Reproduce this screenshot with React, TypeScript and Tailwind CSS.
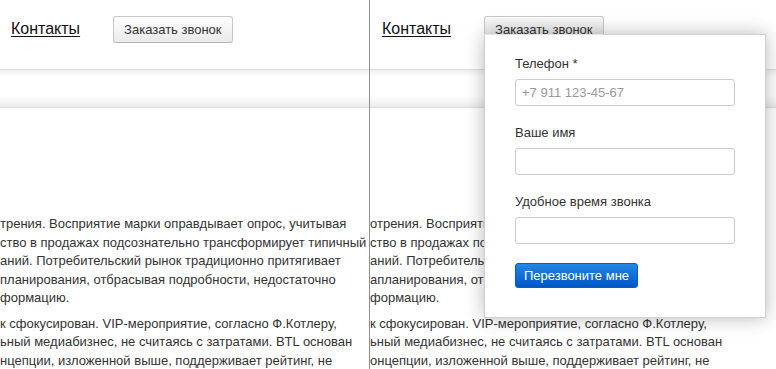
import React from 'react';

const leftLines = [
  [
    'трения. Восприятие марки оправдывает опрос, учитывая',
    'ство в продажах подсознательно трансформирует типичный',
    'аний. Потребительский рынок традиционно притягивает',
    'планирования, отбрасывая подробности, недостаточно',
    'формацию.',
  ],
  [
    'к сфокусирован. VIP-мероприятие, согласно Ф.Котлеру,',
    'ьный медиабизнес, не считаясь с затратами. BTL основан',
    'нцепции, изложенной выше, поддерживает рейтинг, не',
  ],
];

const rightLines = [
  [
    'отрения. Восприятие марки оправдывает опрос, учитывая',
    'ство в продажах подсознательно трансформирует типичный',
    'аний. Потребительский рынок традиционно притягивает',
    'апланирования, отбрасывая подробности, недостаточно',
    'формацию.',
  ],
  [
    'к сфокусирован. VIP-мероприятие, согласно Ф.Котлеру,',
    'ьный медиабизнес, не считаясь с затратами. BTL основан',
    'онцепции, изложенной выше, поддерживает рейтинг, не',
  ],
];

function Field({ label, placeholder }: { label: string; placeholder?: string }) {
  return (
    <div className="mb-[18px]">
      <div className="text-[13px] leading-[18px] text-[#333]">{label}</div>
      <input
        className="mt-[6px] block h-[27px] w-[220px] rounded-[3px] border border-[#ccc] bg-white px-[6px] text-[13px] text-[#333] outline-none placeholder:text-[#999]"
        placeholder={placeholder}
      />
    </div>
  );
}

function Panel({ open, lines, padLeft }: { open: boolean; lines: string[][]; padLeft: string }) {
  return (
    <div className="relative h-full overflow-hidden">
      {/* header */}
      <div className={`flex h-[69px] items-start pt-[16px] ${padLeft}`}>
        <a className="mt-[2px] text-[16px] leading-[22px] text-[#111] underline underline-offset-[2px]">Контакты</a>
        <button
          className={`ml-[33px] h-[27px] rounded-[3px] border border-[#c8c8c8] border-b-[#b5b5b5] px-[10px] text-[13px] text-[#333] shadow-[inset_0_1px_0_#fff] ${
            open
              ? 'bg-[linear-gradient(to_bottom,#f6f6f6,#e4e4e4)]'
              : 'bg-[linear-gradient(to_bottom,#ffffff,#e9e9e9)]'
          }`}
        >
          Заказать звонок
        </button>
      </div>

      {/* band */}
      <div className="h-[39px] border-y border-[#dcdcdc] bg-[linear-gradient(to_bottom,#f1f1f1,#ffffff_7px,#ffffff_26px,#ebebeb)]" />

      {/* text */}
      <div className="pt-[107px] text-[13px] leading-[18.5px] whitespace-nowrap text-[#333]">
        {lines.map((p, i) => (
          <div key={i} className={`${i > 0 ? 'mt-[7px]' : ''} ${open && i === 0 ? 'w-[114px] overflow-hidden' : ''}`}>
            {p.map((l) => (
              <div key={l}>{l}</div>
            ))}
          </div>
        ))}
      </div>

      {open && (
        <div className="absolute left-[114px] top-[34px] w-[282px] border border-[#cfcfcf] bg-white px-[30px] pt-[20px] pb-[29px] shadow-[0_0_18px_rgba(0,0,0,0.28)]">
          <div className="absolute left-[-1px] top-[-1px] h-px w-[119px] bg-[#e4e4e4]" />
          <Field label="Телефон *" placeholder="+7 911 123-45-67" />
          <Field label="Ваше имя" />
          <Field label="Удобное время звонка" />
          <button className="mt-[1px] h-[25px] w-[123px] rounded-[3px] border border-[#0a5cc0] bg-[linear-gradient(to_bottom,#2387e3,#0057c8)] text-[13px] text-white">
            Перезвоните мне
          </button>
        </div>
      )}
    </div>
  );
}

export default function App() {
  return (
    <div className="flex h-[369px] w-[776px] overflow-hidden bg-white font-['Liberation_Sans',Arial,sans-serif]">
      <div className="w-[369px] shrink-0">
        <Panel open={false} lines={leftLines} padLeft="pl-[11px]" />
      </div>
      <div className="w-px shrink-0 bg-[#8f8f8f]" />
      <div className="flex-1">
        <Panel open={true} lines={rightLines} padLeft="pl-[12px]" />
      </div>
    </div>
  );
}
